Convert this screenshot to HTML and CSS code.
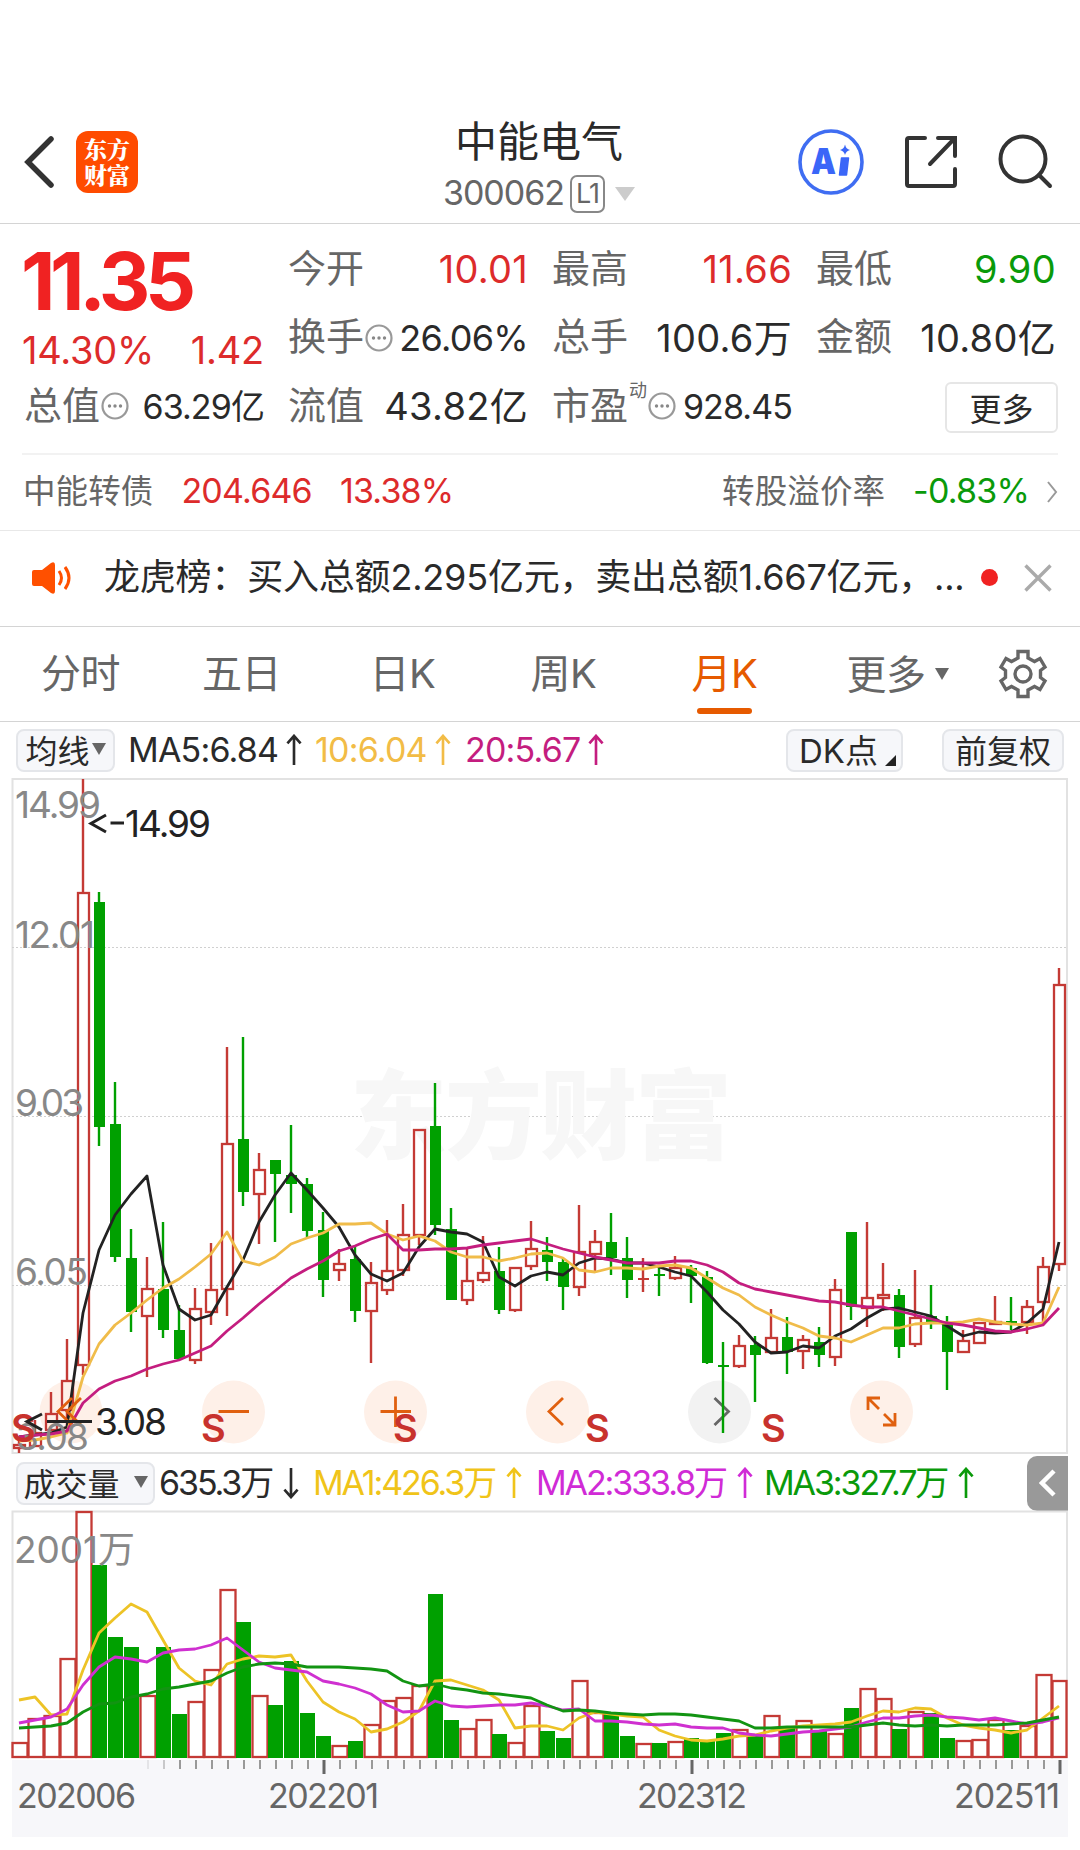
FILE: index.html
```html
<!DOCTYPE html>
<html lang="zh-CN">
<head>
    <meta charset="UTF-8">
    <meta name="viewport" content="width=device-width, initial-scale=1.0">
    <title>中能电气 300062</title>
    <link rel="stylesheet" href="styles.css">
</head>
<body>
    <svg class="defs" width="0" height="0">
        <symbol id="arrowUp" viewBox="0 0 16 34"><path d="M8 33V2M1 10L8 2L15 10" fill="none" stroke="currentColor" stroke-width="2.8"/></symbol>
        <symbol id="arrowDown" viewBox="0 0 16 34"><path d="M8 1V32M1 24L8 32L15 24" fill="none" stroke="currentColor" stroke-width="2.8"/></symbol>
        <symbol id="info" viewBox="0 0 28 28"><circle cx="14" cy="14" r="12.5" fill="none" stroke="#999" stroke-width="2.2"/><g fill="#888"><circle cx="8.5" cy="14" r="1.7"/><circle cx="14" cy="14" r="1.7"/><circle cx="19.500" cy="14" r="1.7"/></g></symbol>
    </svg>

    <div class="header">
        <svg class="back" width="32" height="54" viewBox="0 0 32 54"><path d="M28 4L5 27L28 50" fill="none" stroke="#333" stroke-width="5.5" stroke-linecap="round"/></svg>
        <div class="logo"><span>东方</span><span>财富</span></div>
        <div class="title">
            <div class="name">中能电气</div>
            <div class="code"><span class="code-num">300062</span><span class="level">L1</span><i class="tri tri-light"></i></div>
        </div>
        <div class="tools">
            <svg width="66" height="66" viewBox="0 0 66 66">
                <circle cx="33" cy="33" r="31" fill="none" stroke="#3f6df2" stroke-width="3.600"/>
                <text x="13" y="44.500" textLength="25" lengthAdjust="spacingAndGlyphs" class="ai-text">A</text>
                <path d="M43.500 29H50.500L48.500 46H41.500Z" fill="#3a66f8" stroke="#3a66f8" stroke-width="1.500" stroke-linejoin="round"/>
                <path d="M47 15.500Q48 20 52 21Q48 22 47 26Q46 22 42 21Q46 20 47 15.500Z" fill="#3a66f8"/>
            </svg>
            <svg width="56" height="56" viewBox="0 0 56 56" fill="none" stroke="#333" stroke-width="4" stroke-linecap="round">
                <path d="M22 4H6Q4 4 4 6V50Q4 52 6 52H50Q52 52 52 50V35M35 4H52V22M51 5L27 30"/>
            </svg>
            <svg width="58" height="58" viewBox="0 0 58 58" fill="none" stroke="#333" stroke-width="4" stroke-linecap="round">
                <circle cx="26" cy="26" r="22.500"/><path d="M42 42L53 53"/>
            </svg>
        </div>
    </div>

    <div class="quote">
        <div class="price">
            <div class="last">11.35</div>
            <div class="change"><span>14.30%</span><span>1.42</span></div>
        </div>
        <div class="cell"><label>今开</label><b class="up">10.01</b></div>
        <div class="cell"><label>最高</label><b class="up">11.66</b></div>
        <div class="cell"><label>最低</label><b class="down">9.90</b></div>
        <div class="cell"><label>换手</label><svg class="info"><use href="#info"/></svg><b class="mid">26.06%</b></div>
        <div class="cell"><label>总手</label><b>100.6万</b></div>
        <div class="cell"><label>金额</label><b>10.80亿</b></div>
        <div class="cell"><label>总值</label><svg class="info"><use href="#info"/></svg><b class="small">63.29亿</b></div>
        <div class="cell"><label>流值</label><b>43.82亿</b></div>
        <div class="cell"><label>市盈</label><sup>动</sup><svg class="info"><use href="#info"/></svg><b class="small">928.45</b></div>
        <div class="cell"><button class="more">更多</button></div>
    </div>

    <div class="bond">
        <span>中能转债</span>
        <span class="up bond-price">204.646</span>
        <span class="up bond-pct">13.38%</span>
        <span class="premium">转股溢价率</span>
        <span class="down premium-num">-0.83%</span>
        <svg width="12" height="24" viewBox="0 0 12 24"><path d="M2 2L10 12L2 22" fill="none" stroke="#999" stroke-width="2"/></svg>
    </div>

    <div class="news">
        <svg width="44" height="36" viewBox="0 0 44 36">
            <path d="M3 10H11L20 3Q24 1 24 5V31Q24 35 20 33L11 26H3Q1 26 1 24V12Q1 10 3 10Z" fill="#ff5000"/>
            <path d="M28 11Q33 18 28 25M34 7Q42 18 34 29" fill="none" stroke="#ff5000" stroke-width="3"/>
        </svg>
        <span class="news-text">龙虎榜：买入总额2.295亿元，卖出总额1.667亿元，<span class="dots">...</span></span>
        <i class="dot"></i>
        <svg width="28" height="28" viewBox="0 0 28 28"><path d="M1.500 1.500L26.500 26.500M26.500 1.500L1.500 26.500" stroke="#aaa" stroke-width="3.400"/></svg>
    </div>

    <div class="tabs">
        <div class="tab">分时</div>
        <div class="tab">五日</div>
        <div class="tab">日K</div>
        <div class="tab">周K</div>
        <div class="tab active">月K</div>
        <div class="tab tab-more">更多<i class="tri"></i></div>
        <svg class="gear" width="50" height="50" viewBox="0 0 50 50" fill="none" stroke="#666" stroke-width="3.400">
            <path d="M20 2.500H30V9L36.500 12.500L42 9.500L47 18L42.500 21.500V28.500L47 32L42 40.500L36.500 37.500L30 41V47.500H20V41L13.500 37.500L8 40.500L3 32L7.500 28.500V21.500L3 18L8 9.500L13.500 12.500L20 9Z"/>
            <circle cx="25" cy="25" r="8"/>
        </svg>
    </div>

    <div class="ma-bar">
        <button class="chip chip-ma">均线<i class="tri"></i></button>
        <span class="ma ma5">MA5:6.84<svg><use href="#arrowUp"/></svg></span>
        <span class="ma ma10">10:6.04<svg><use href="#arrowUp"/></svg></span>
        <span class="ma ma20">20:5.67<svg><use href="#arrowUp"/></svg></span>
        <button class="chip chip-dk">DK点<i class="corner"></i></button>
        <button class="chip chip-fq">前复权</button>
    </div>

    <svg id="kline" class="chart" width="1080" height="682" viewBox="0 776 1080 682">
        <rect x="12.500" y="779" width="1054.500" height="674" class="frame"/>
        <path d="M12 947.500H1067M12 1116.500H1067M12 1285.500H1067" class="grid"/>
        <text x="350" y="1151" textLength="382" class="watermark">东方财富</text>
        <g class="round">
            <circle cx="71" cy="1412" r="31.500"/>
            <circle cx="233.500" cy="1412" r="31.500"/>
            <circle cx="395.500" cy="1412" r="31.500"/>
            <circle cx="557.500" cy="1412" r="31.500"/>
            <circle cx="719.500" cy="1412" r="31.500" class="off"/>
            <circle cx="881.500" cy="1412" r="31.500"/>
        </g>
        <g class="glyph">
            <path d="M218.500 1411.500H249M380.500 1411.500H411M395.500 1396.500V1427"/>
            <path d="M563 1398L549 1411.500L563 1425"/>
            <path d="M714.500 1398L728.500 1411.500L714.500 1425" class="off"/>
            <path d="M868 1410V1398H880M868 1398L879 1409M884 1414L895 1425M895 1413V1425H883"/>
        </g>
        <g id="candles"></g>
        <path class="glyph" d="M72 1398L58 1411.500L72 1425M81 1398L67 1411.500L81 1425"/>
        <g class="axis">
            <text x="15" y="818" textLength="86">14.99</text>
            <text x="15" y="948" textLength="80">12.01</text>
            <text x="15" y="1116" textLength="69">9.03</text>
            <text x="15" y="1285" textLength="73">6.05</text>
            <text x="16" y="1450" textLength="73">3.08</text>
        </g>
        <g class="sell">
            <text x="11" y="1442">S</text>
            <text x="201" y="1442">S</text>
            <text x="393" y="1442">S</text>
            <text x="585" y="1442">S</text>
            <text x="761" y="1442">S</text>
        </g>
        <g class="mark">
            <path d="M106 815L91 823.500L106 832M110.500 823H124M42 1414L27 1421.500L42 1430M47 1421.500H92"/>
            <text x="125" y="837" textLength="86">14.99</text>
            <text x="95" y="1435" textLength="72">3.08</text>
        </g>
    </svg>

    <div class="vol-bar">
        <button class="chip chip-vol">成交量<i class="tri"></i></button>
        <span class="ma vol">635.3万<svg><use href="#arrowDown"/></svg></span>
        <span class="ma vol1">MA1:426.3万<svg><use href="#arrowUp"/></svg></span>
        <span class="ma vol2">MA2:333.8万<svg><use href="#arrowUp"/></svg></span>
        <span class="ma vol3">MA3:327.7万<svg><use href="#arrowUp"/></svg></span>
        <div class="side"><svg width="18" height="28" viewBox="0 0 18 28"><path d="M15 2L3 14L15 26" fill="none" stroke="#fff" stroke-width="4.500"/></svg></div>
    </div>

    <svg id="volume" class="chart" width="1080" height="340" viewBox="0 1510 1080 340">
        <rect x="12" y="1760" width="1056" height="77" fill="#f7f7fa"/>
        <path d="M12.500 1758V1511.500H1067V1758" class="frame"/>
        <g id="bars"></g>
        <g id="ticks"></g>
        <text x="14" y="1563" textLength="121" class="vol-label">2001万</text>
        <g class="dates">
            <text x="17" y="1808" textLength="119">202006</text>
            <text x="268" y="1808" textLength="111">202201</text>
            <text x="637" y="1808" textLength="110">202312</text>
            <text x="954" y="1808" textLength="106">202511</text>
        </g>
    </svg>

    <script src="chart.js"></script>
</body>
</html>
```
FILE: styles.css
```css
body {
    margin: 0;
    padding: 0;
    width: 1080px;
    height: 1850px;
    overflow: hidden;
    background: #fff;
    color: #2a2a2a;
    font-family: Inter, "Noto Sans CJK SC", sans-serif;
    line-height: 1.2;
}
* {
    box-sizing: border-box;
}
svg {
    display: block;
    flex: none;
}
.defs {
    position: absolute;
}
button {
    font-family: inherit;
    color: #2a2a2a;
    padding: 0;
}
.up {
    color: #dd2b2b;
}
.down {
    color: #0a9a0a;
}
.tri {
    width: 0;
    height: 0;
    border: 7px solid transparent;
    border-top: 12px solid #666;
    border-bottom: 0;
}
.tri-light {
    border-width: 14px 10px 0;
    border-top-color: #ccc;
    margin-left: 10px;
}

/* header */
.header {
    height: 224px;
    padding: 101px 25px 0 23px;
    border-bottom: 1px solid #d4d4d4;
    display: grid;
    grid-template-columns: 53px 204px 1fr 257px;
    align-items: center;
}
.logo {
    width: 62px;
    height: 62px;
    border-radius: 12px;
    background: #ff4b00;
    color: #fff;
    font: 900 23px/26px "Noto Serif CJK SC", "Noto Sans CJK SC", serif;
    display: flex;
    flex-direction: column;
    align-items: center;
    justify-content: center;
}
.title {
    text-align: center;
    padding-top: 2px;
}
.name {
    font-size: 42px;
    line-height: 61px;
}
.code {
    display: flex;
    align-items: center;
    justify-content: center;
    height: 44px;
    color: #666;
}
.code-num {
    font-size: 34px;
    letter-spacing: -1px;
}
.level {
    width: 35px;
    height: 38px;
    margin-left: 6px;
    border: 2px solid #888;
    border-radius: 7px;
    font-size: 27px;
    line-height: 34px;
    letter-spacing: -1px;
}
.tools {
    display: flex;
    justify-content: space-between;
    align-items: center;
}
.ai-text {
    font-family: Inter, sans-serif;
    font-weight: 900;
    font-size: 36px;
    fill: #3a66f8;
}

/* quote */
.quote {
    height: 229px;
    padding: 12px 24px 0;
    display: grid;
    grid-template-columns: repeat(4, 240px);
    grid-template-rows: repeat(3, 68.5px);
    column-gap: 24px;
}
.price {
    grid-row: span 2;
    color: #f02222;
}
.last {
    margin-left: -3px;
    font-size: 80px;
    font-weight: 700;
    line-height: 90px;
    letter-spacing: -5.4px;
}
.change {
    display: flex;
    justify-content: space-between;
    margin-left: -2px;
    font-size: 38px;
    line-height: 48px;
    letter-spacing: -0.2px;
    color: #dd2b2b;
}
.cell {
    display: flex;
    align-items: center;
    font-size: 38px;
    white-space: nowrap;
}
.cell label {
    color: #666;
    font-size: 38px;
    padding-bottom: 3px;
}
.cell b {
    margin-left: auto;
    font-weight: 400;
    letter-spacing: 0.3px;
}
.cell .small {
    font-size: 34px;
    letter-spacing: -0.9px;
}
.cell .mid {
    font-size: 36px;
    letter-spacing: -0.7px;
}
.cell sup {
    width: 18px;
    font-size: 18px;
    line-height: 20px;
    color: #666;
    margin: -32px 0 0 1px;
}
.info {
    width: 28px;
    height: 28px;
    margin: 0 0 2px 1px;
}
.more {
    width: 113px;
    height: 51px;
    margin: 0 -2px 0 auto;
    padding-bottom: 2px;
    background: #fff;
    border: 2px solid #e6e6e6;
    border-radius: 6px;
    font-size: 32px;
}

/* bond */
.bond {
    height: 77px;
    margin: 0 22px;
    padding: 0 0 2px 1px;
    border-top: 2px solid #f2f2f2;
    display: flex;
    align-items: center;
    font-size: 32.5px;
    letter-spacing: 0.1px;
    color: #666;
}
.bond-price {
    margin-left: 28px;
}
.bond-price, .bond-pct, .premium-num {
    font-size: 34px;
    letter-spacing: -0.8px;
}
.bond-pct {
    margin-left: 28px;
}
.premium {
    margin-left: auto;
    margin-right: 28px;
}
.bond svg {
    margin-left: 17px;
}

/* news */
.news {
    height: 97px;
    border-top: 1px solid #e8e8e8;
    border-bottom: 1px solid #d4d4d4;
    padding: 0 28px 2px 31px;
    display: flex;
    align-items: center;
}
.news-text {
    margin-left: 29px;
    width: 858px;
    display: flex;
    font-size: 36px;
    letter-spacing: -0.2px;
    white-space: nowrap;
}
.dots {
    margin-left: auto;
    font-family: Inter, sans-serif;
    font-feature-settings: "calt" 0;
}
.dot {
    width: 17px;
    height: 17px;
    border-radius: 50%;
    background: #f02222;
    margin: 0 auto 0 19px;
}

/* tabs */
.tabs {
    height: 95px;
    border-bottom: 1px solid #d4d4d4;
    display: flex;
    align-items: center;
}
.tab {
    width: 161px;
    height: 94px;
    line-height: 93px;
    text-align: center;
    font-size: 40px;
    color: #666;
    letter-spacing: -0.5px;
}
.active {
    color: #e65a00;
    position: relative;
}
.active::after {
    content: "";
    position: absolute;
    left: 53px;
    bottom: 7px;
    width: 55px;
    height: 6px;
    border-radius: 3px;
    background: #e65a00;
}
.tab-more {
    display: flex;
    align-items: center;
    justify-content: center;
    padding-left: 24px;
}
.tab-more .tri {
    margin-left: 9px;
}
.gear {
    margin-left: 32px;
}

/* indicator bars */
.ma-bar, .vol-bar {
    display: flex;
    align-items: center;
    white-space: nowrap;
}
.ma-bar {
    height: 54px;
    padding: 2px 16px 0;
}
.vol-bar {
    height: 52px;
    padding: 0 0 2px 16px;
}
.chip {
    height: 43px;
    flex: none;
    display: flex;
    align-items: center;
    justify-content: center;
    background: #f6f7fa;
    border: 2px solid #e4e6ea;
    border-radius: 8px;
    font-size: 32px;
    padding-bottom: 3px;
}
.chip-ma {
    width: 99px;
}
.chip-ma .tri {
    margin-left: 2px;
}
.chip-dk {
    width: 117px;
    margin-left: auto;
    position: relative;
    padding-right: 12px;
    font-size: 33px;
}
.corner {
    position: absolute;
    right: 5px;
    bottom: 4px;
    border-left: 11px solid transparent;
    border-bottom: 11px solid #222;
}
.chip-fq {
    width: 122px;
    margin-left: 39px;
}
.chip-vol {
    width: 139px;
}
.chip-vol .tri {
    margin-left: 14px;
}
.ma {
    display: flex;
    align-items: center;
    font-size: 34px;
    letter-spacing: -0.8px;
}
.ma svg {
    width: 16px;
    height: 32px;
    margin-left: 8px;
}
.ma5 {
    width: 187px;
    margin-left: 13px;
}
.ma10 {
    width: 150px;
    color: #f2bc46;
}
.ma20 {
    color: #c41d7f;
}
.vol-bar .ma {
    letter-spacing: -2.1px;
}
.vol-bar .ma svg {
    margin-left: 11px;
}
.vol-bar .vol {
    width: 154px;
    margin-left: 4px;
}
.vol1 {
    width: 223px;
    color: #f0c419;
}
.vol2 {
    width: 228px;
    color: #d02bd6;
}
.vol3 {
    color: #0a9a0a;
}
.side {
    width: 41px;
    height: 55px;
    margin: 0 12px 0 auto;
    border-radius: 10px 0 0 10px;
    background: #999;
    display: flex;
    align-items: center;
    justify-content: center;
}

/* charts */
.frame {
    fill: none;
    stroke: #e2e2e2;
    stroke-width: 2;
}
.grid {
    stroke: #d0d0d0;
    stroke-dasharray: 2 2;
}
.watermark {
    font: 900 97px "Noto Sans CJK SC", sans-serif;
    fill: #f7f7f7;
}
.round circle {
    fill: #fef0e8;
}
.round .off {
    fill: #f2f2f2;
}
.glyph {
    fill: none;
    stroke: #e0600f;
    stroke-width: 2.8;
}
.glyph .off {
    stroke: #666;
}
.axis text, .vol-label {
    font-size: 37px;
    fill: #888;
}
.sell text {
    font-size: 38px;
    font-weight: 600;
    fill: #c8322d;
}
.mark path {
    fill: none;
    stroke: #222;
    stroke-width: 3;
}
.mark text {
    font-size: 37px;
    fill: #222;
}
.dates text {
    font-size: 34px;
    fill: #666;
}
.line {
    fill: none;
    stroke-width: 2.8;
    stroke-linejoin: round;
}
```
FILE: chart.js
```js
// [direction, high, body top, body bottom, low]
const candles = [
    ["r",1440,1444,1449,1453],["r",1420,1432,1447,1447],["r",1392,1413,1431,1431],["r",1339,1380,1411,1433],
    ["r",779,892,1366,1375],["g",892,902,1127,1146],["g",1082,1124,1257,1262],["g",1229,1258,1312,1332],
    ["r",1257,1288,1317,1377],["g",1222,1289,1330,1338],["g",1305,1330,1359,1359],["r",1288,1308,1361,1364],
    ["r",1243,1289,1313,1325],["r",1047,1143,1290,1316],["g",1037,1139,1192,1206],["r",1153,1169,1195,1244],
    ["g",1160,1160,1174,1242],["g",1125,1175,1184,1213],["g",1178,1184,1231,1237],["g",1212,1230,1280,1297],
    ["r",1249,1263,1271,1281],["g",1246,1259,1311,1322],["r",1262,1282,1312,1363],["r",1220,1270,1291,1295],
    ["r",1204,1234,1271,1276],["r",1129,1129,1236,1245],["g",1083,1126,1225,1235],["g",1208,1229,1300,1300],
    ["r",1247,1280,1301,1305],["r",1236,1272,1281,1283],["g",1247,1271,1310,1314],["r",1267,1267,1311,1312],
    ["r",1221,1248,1267,1270],["g",1237,1250,1262,1281],["g",1258,1262,1287,1310],["r",1205,1251,1288,1296],
    ["r",1230,1241,1255,1271],["g",1213,1242,1258,1275],["g",1237,1258,1280,1298],["r",1258,1278,1280,1292],
    ["g",1265,1274,1276,1296],["r",1256,1267,1279,1280],["g",1265,1268,1276,1303],["g",1271,1277,1363,1364],
    ["g",1342,1365,1367,1433],["r",1335,1345,1367,1368],["g",1336,1345,1355,1402],["r",1309,1337,1353,1353],
    ["g",1317,1337,1352,1374],["r",1335,1339,1352,1369],["g",1327,1342,1355,1367],["r",1279,1289,1358,1366],
    ["g",1232,1232,1307,1320],["r",1222,1297,1309,1327],["r",1263,1294,1299,1311],["g",1289,1295,1347,1358],
    ["r",1270,1317,1345,1347],["g",1285,1316,1324,1329],["g",1316,1324,1352,1390],["r",1330,1340,1353,1353],
    ["r",1322,1322,1344,1344],["r",1296,1321,1325,1325],["g",1297,1321,1323,1330],["r",1300,1306,1323,1334],
    ["r",1257,1266,1303,1323],["r",968,984,1265,1271]
];
const ma5 = [1437,1435,1433,1427,1313,1250,1215,1194,1176,1265,1309,1320,1315,1287,1260,1222,1195,1173,1190,1208,1227,1255,1274,1281,1273,1247,1229,1232,1234,1242,1277,1286,1276,1272,1275,1263,1258,1259,1263,1263,1267,1272,1276,1292,1310,1324,1342,1353,1352,1346,1348,1336,1329,1318,1309,1308,1312,1316,1326,1336,1332,1333,1332,1323,1309,1242];
const ma10 = [1441,1440,1437,1433,1377,1344,1325,1313,1300,1288,1279,1267,1254,1232,1261,1265,1257,1244,1238,1233,1224,1224,1223,1234,1240,1236,1241,1252,1257,1257,1261,1258,1254,1253,1258,1270,1272,1268,1268,1269,1266,1265,1268,1278,1288,1295,1307,1315,1322,1328,1336,1338,1342,1335,1328,1328,1324,1323,1323,1322,1319,1322,1324,1325,1323,1287];
const ma20 = [1437,1435,1434,1431,1403,1389,1381,1376,1369,1364,1360,1353,1346,1331,1318,1304,1291,1278,1269,1261,1251,1246,1239,1234,1250,1250,1249,1249,1248,1245,1243,1241,1239,1244,1249,1253,1257,1260,1263,1263,1263,1261,1261,1265,1272,1283,1289,1292,1295,1298,1301,1302,1305,1307,1307,1311,1315,1319,1323,1325,1328,1331,1332,1329,1325,1308];

// volume series, 1513 is the top of the plot and 1768 the base line
const volume = [1751,1727,1724,1665,1513,1569,1643,1653,1703,1653,1723,1709,1676,1594,1628,1703,1713,1668,1722,1745,1755,1750,1733,1708,1705,1693,1599,1729,1737,1728,1743,1751,1713,1740,1747,1687,1720,1723,1745,1753,1752,1750,1747,1749,1742,1738,1745,1724,1737,1729,1739,1742,1716,1696,1706,1738,1719,1722,1747,1749,1748,1728,1739,1734,1681,1687];
const volMa1 = [1708,1705,1724,1723,1677,1639,1623,1609,1617,1646,1675,1688,1693,1671,1666,1663,1663.5,1662,1688,1710,1721,1728,1741,1738,1731,1719,1688,1687,1693,1698,1708,1737,1735,1735,1739,1727,1721,1723,1724.5,1726,1739,1745,1749.5,1750,1748,1745,1744,1740,1737,1734.5,1734,1733,1731,1724.5,1719,1720,1716,1717,1727,1734,1737,1739,1742,1739,1726.5,1714];
const volMa2 = [1732,1729,1726,1717,1693,1674,1664,1666,1669,1660,1657,1655.5,1651,1644,1656,1669,1675.5,1677,1679,1688,1692,1696,1702,1713,1721,1719,1709,1714.5,1715.5,1714.5,1713,1713,1711,1714,1718,1717.5,1729.5,1729.5,1731,1733,1734,1733,1736.5,1737,1737,1742,1744,1745,1743,1741,1740,1738.5,1736,1731,1727,1727,1725,1724,1725.5,1727,1728.5,1727,1729.5,1733,1731,1726.5];
const volMa3 = [1737,1736,1735,1732,1720,1712,1711,1705.5,1702,1696.5,1695,1692,1688,1680,1674,1671,1670,1671,1674,1674,1674.5,1675.5,1676,1678,1688,1694,1692,1695.5,1697.5,1701,1702,1704,1706,1713.5,1719,1718,1719,1722,1723,1723.5,1723,1723,1724,1726,1727.5,1730,1737,1737,1736.5,1736,1736,1736,1736,1734,1732,1734,1734.5,1734,1735,1734,1734,1733.5,1733,1732,1729,1726];

const RED = "#c43a35";
const GREEN = "#00a000";
const VOL_TOP = 1511;
const VOL_BASE = 1758;

function px(i) {
    return 19 + 16 * i;
}

function volY(v) {
    return Math.round(VOL_TOP + (v - 1513) * (VOL_BASE - VOL_TOP) / 255);
}

function line(points, color) {
    const d = points.map((y, i) => px(i) + "," + y).join(" ");
    return `<polyline class="line" points="${d}" stroke="${color}"/>`;
}

function drawCandles() {
    let out = "";
    candles.forEach(([dir, high, top, bottom, low], i) => {
        const x = px(i);
        const color = dir === "r" ? RED : GREEN;
        if (high < top) out += `<rect x="${x - 1.2}" y="${high}" width="2.4" height="${top - high}" fill="${color}"/>`;
        if (low > bottom) out += `<rect x="${x - 1.2}" y="${bottom}" width="2.4" height="${low - bottom}" fill="${color}"/>`;
        if (dir === "g" || bottom - top < 3) {
            out += `<rect x="${x - 5}" y="${top}" width="11" height="${bottom - top}" fill="${color}"/>`;
        } else {
            out += `<rect x="${x - 5}" y="${top + 1}" width="11" height="${bottom - top - 2}" fill="none" stroke="${color}" stroke-width="2.3"/>`;
        }
    });
    out += line(ma5, "#222") + line(ma10, "#f0bc4a") + line(ma20, "#c41d7f");
    document.getElementById("candles").innerHTML = out;
}

function drawVolume() {
    let out = "";
    volume.forEach((v, i) => {
        const x = px(i);
        const top = volY(v);
        if (candles[i][0] === "g") {
            out += `<rect x="${x - 7}" y="${top}" width="15" height="${VOL_BASE - top}" fill="${GREEN}"/>`;
        } else {
            const w = i === 65 ? 14 : 15;
            out += `<rect x="${x - 6.5}" y="${top + 1}" width="${w}" height="${VOL_BASE - 2 - top}" fill="none" stroke="${RED}" stroke-width="2.3"/>`;
        }
    });
    out += line(volMa1.map(volY), "#edc326") + line(volMa2.map(volY), "#cf30d0") + line(volMa3.map(volY), "#129412");
    document.getElementById("bars").innerHTML = out;
}

function drawTicks() {
    let out = "";
    for (let i = 8; i < 66; i++) {
        const major = i === 19 || i === 42 || i === 65;
        const opacity = i === 8 ? 0.2 : i === 9 ? 0.5 : 1;
        out += `<rect x="${px(i) + (major ? -0.5 : 0)}" y="1760" width="${major ? 3 : 2}" height="${major ? 14 : 9}" fill="${major ? "#666" : "#999"}" opacity="${opacity}"/>`;
    }
    document.getElementById("ticks").innerHTML = out;
}

drawCandles();
drawVolume();
drawTicks();
```
